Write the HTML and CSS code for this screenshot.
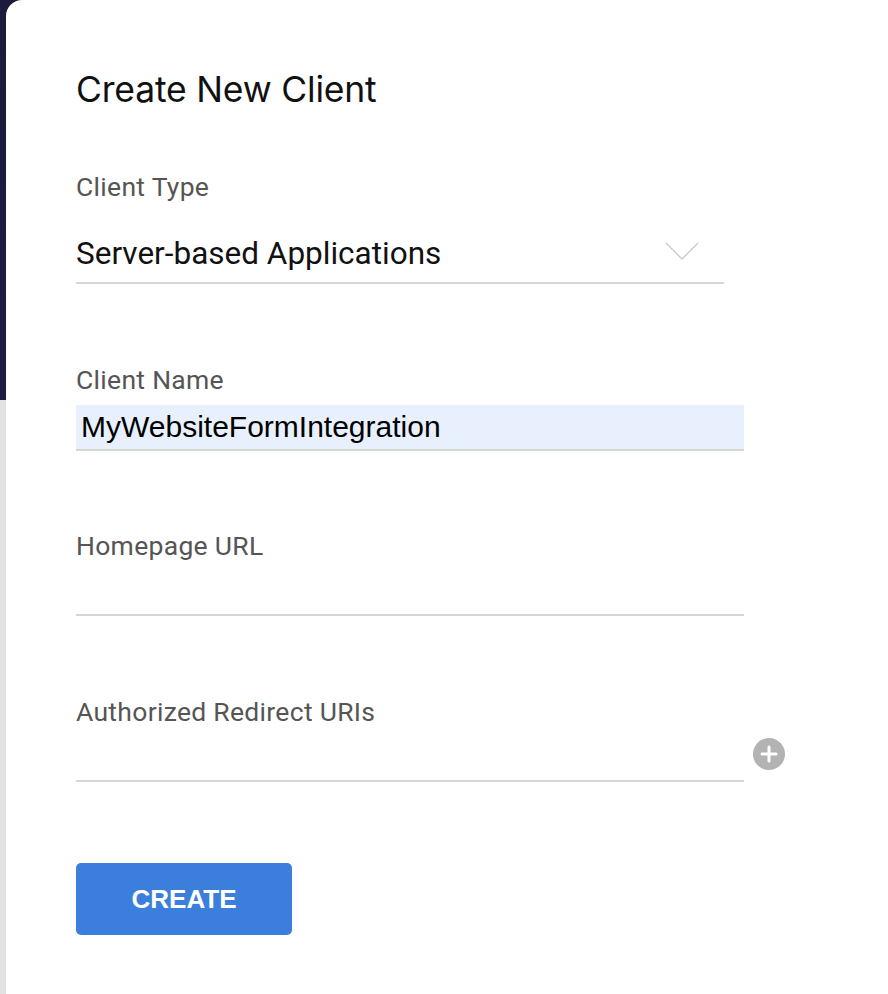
FILE: index.html
```html
<!DOCTYPE html>
<html lang="en">
<head>
<meta charset="utf-8">
<title>Create New Client</title>
<link rel="stylesheet" href="styles.css">
</head>
<body>
<div class="page">
  <main class="panel">
    <h1 class="title">Create New Client</h1>

    <div class="field field-type">
      <label class="label">Client Type</label>
      <div class="select">
        <span class="select-value">Server-based Applications</span>
        <svg class="chevron" width="34" height="18" viewBox="0 0 34 18"><path d="M1 1 L17 17 L33 1" fill="none" stroke="#c8c8c8" stroke-width="1.3"/></svg>
      </div>
    </div>

    <div class="field field-name">
      <label class="label">Client Name</label>
      <div class="input input-filled">MyWebsiteFormIntegration</div>
    </div>

    <div class="field field-url">
      <label class="label">Homepage URL</label>
      <div class="input"></div>
    </div>

    <div class="field field-uri">
      <label class="label">Authorized Redirect URIs</label>
      <div class="uri-row">
        <div class="input"></div>
        <span class="add-btn">
          <svg width="32" height="32" viewBox="0 0 32 32"><circle cx="16" cy="16" r="16" fill="#b3b3b3"/><path d="M16 9 V23 M9 16 H23" stroke="#fff" stroke-width="3" stroke-linecap="round"/></svg>
        </span>
      </div>
    </div>

    <button class="create-btn">CREATE</button>
  </main>
</div>
</body>
</html>
```

FILE: styles.css
```css
html, body {
  margin: 0;
  padding: 0;
}
body {
  width: 888px;
  height: 994px;
  overflow: hidden;
}
.page {
  height: 994px;
  background: linear-gradient(to bottom, #1c1a3d 0, #1e1b42 400px, #e2e2e2 400px, #e2e2e2 100%);
  padding-left: 6px;
}
.panel {
  height: 100%;
  background: #fff;
  border-top-left-radius: 16px;
  padding: 70px 0 0 70px;
  box-sizing: border-box;
}
.title {
  margin: 0;
  font-family: "Inter", "Noto Sans", sans-serif;
  font-weight: 400;
  font-size: 35.5px;
  line-height: 40px;
  color: #111;
  letter-spacing: -0.2px;
}
.field {
  display: flex;
  flex-direction: column;
}
.label {
  font-family: "Roboto", "Liberation Sans", sans-serif;
  font-size: 26.5px;
  line-height: 30px;
  color: #555;
  letter-spacing: 0.3px;
}
.field-type { margin-top: 62px; width: 648px; }
.select {
  display: flex;
  align-items: center;
  justify-content: space-between;
  height: 56px;
  padding-top: 24px;
  border-bottom: 2px solid #d6d6d6;
}
.select-value {
  font-family: "Roboto", "Liberation Sans", sans-serif;
  font-size: 31.5px;
  line-height: 40px;
  color: #111;
}
.chevron { margin-right: 25px; margin-bottom: 6px; }

.field-name { margin-top: 81px; width: 668px; }
.input {
  height: 44px;
  margin-top: 9px;
  border-bottom: 2px solid #d6d6d6;
}
.input-filled {
  margin-top: 10px;
  background: #e8f0fe;
  font-family: "Liberation Sans", Arial, sans-serif;
  font-size: 30px;
  line-height: 44px;
  color: #000;
  padding-left: 5px;
}
.field-url { margin-top: 80px; width: 668px; }
.field-uri { margin-top: 81px; width: 712px; }
.uri-row {
  display: flex;
  align-items: center;
}
.uri-row .input { width: 668px; flex: none; }
.add-btn { margin-left: 9px; margin-bottom: 1px; display: flex; }
.create-btn {
  display: block;
  margin-top: 81px;
  width: 216px;
  height: 72px;
  border: none;
  border-radius: 5px;
  background: #3c7edb;
  color: #fff;
  font-family: "Liberation Sans", Arial, sans-serif;
  font-weight: 700;
  font-size: 26px;
  padding: 0;
}
```
